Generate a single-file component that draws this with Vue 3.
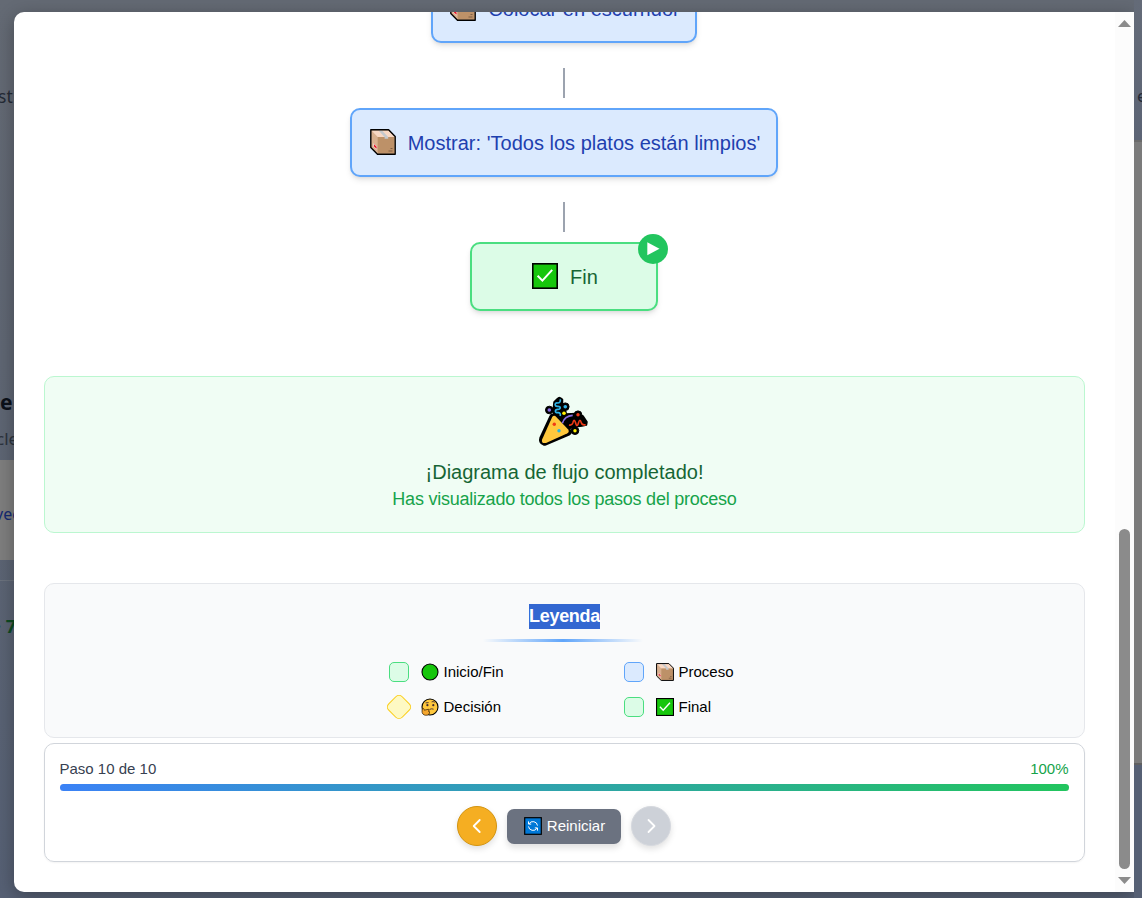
<script setup>
const legend = [
  { shape: 'green', icon: 'circle', label: 'Inicio/Fin' },
  { shape: 'blue', icon: 'box', label: 'Proceso' },
  { shape: 'diamond', icon: 'think', label: 'Decisión' },
  { shape: 'green', icon: 'check', label: 'Final' },
]
const progress = 100
</script>

<template>
  <svg class="defs" aria-hidden="true">
    <symbol id="i-box" viewBox="0 0 26 26">
      <path d="M1 1H18.5L25 7.5V25H7.5L1 18.5Z" fill="#d9b08f" />
      <path d="M1.5 1.5H18.4L24.5 8H7.7Z" fill="#f8d8c4" />
      <path d="M7.7 8H24.5V24.5H7.7Z" fill="#bd9168" />
      <path d="M8.5 1.5H12L18.2 8V9.7H14.6V8Z" fill="#c5c8cc" />
      <path d="M3.4 14.2L7 17.4V20.8L3.4 17.4Z" fill="#f3dfe0" />
      <path d="M4 15.2L6.6 17.7V19.7L4 17.4Z" fill="#e81224" />
      <path d="M20.5 19.5H22.5M18.5 22H22.5" stroke="#806044" stroke-width="1.2" />
      <path d="M.8 .8H18.6L25.2 7.4V25.2H7.5L.8 18.6Z" fill="none" stroke="#000" stroke-width="1.4" stroke-linejoin="round" />
    </symbol>
    <symbol id="i-check" viewBox="0 0 26 26">
      <rect x=".8" y=".8" width="24.4" height="24.4" fill="#16c60c" stroke="#000" stroke-width="1.6" />
      <path d="M5.6 12.8L10.4 17.6L20.2 6.8" fill="none" stroke="#fff" stroke-width="2" />
    </symbol>
    <symbol id="i-circle" viewBox="0 0 18 18">
      <circle cx="9" cy="9" r="8" fill="#16c60c" stroke="#000" stroke-width="1.1" />
    </symbol>
    <symbol id="i-think" viewBox="0 0 18 18">
      <circle cx="9" cy="9" r="8" fill="#ffc83d" stroke="#000" stroke-width="1.1" />
      <circle cx="6.4" cy="7.2" r="1.1" fill="#402a32" />
      <circle cx="12.3" cy="7.2" r="1.1" fill="#402a32" />
      <path d="M4.6 4.9L7.6 4.6M10.6 3.9Q12 3 13.8 4.3M8.6 11.4Q10.6 10.3 12.6 11.2" fill="none" stroke="#402a32" stroke-width=".9" />
      <path d="M1.3 10.6C2.3 9.8 3 10.6 3.3 12.2L7.2 11.3C8.7 11.3 8.6 12.7 7.3 13.1L8.4 13.5C9.2 15.6 7.4 17.4 4.8 17.3C2.2 17.2 .9 15.4 1 13Z" fill="#f5a62d" stroke="#2a1a08" stroke-width=".7" />
    </symbol>
    <symbol id="i-party" viewBox="0 0 52 52">
      <g fill="#000" stroke="#000" stroke-linejoin="round">
        <path d="M14.8 21.5L30 36L6.5 46Q4 45.5 5 42.5Z" stroke-width="7.5" />
        <circle cx="11.3" cy="14" r="3.8" /><circle cx="27.3" cy="10.7" r="3.8" />
        <circle cx="40" cy="18.7" r="3.8" /><circle cx="37" cy="34.7" r="3.8" />
        <path d="M19 3Q22 0 24.5 3.5L24.5 9L28 16L28 18L38 17.5L45 20L49 26L48.5 29L44 30L36 31L30 33L18 22L15 16L16 6Z" stroke-width="1.5" />
      </g>
      <path d="M14.2 21Q16 18.6 18.5 21.2L30.2 33.6Q31.8 36 29 37.6L8 46.9Q3.2 48 4 43.7Z" fill="#ffc83d" />
      <path d="M22.2 3.4C22.8 6 21.5 7.3 19 6.9C16.2 7 16.8 10.6 19.5 10.3C23.4 10 22.7 13.5 19.7 13.4C16.6 13.4 16.8 17 19.5 16.7C22 16.2 22.8 18 22.2 20" fill="none" stroke="#2cb4e8" stroke-width="1.7" />
      <path d="M31 29Q34 29.6 34.8 27Q36 22 37.5 26.5Q39 32.5 40.6 26.5Q42 22 43.2 26.5Q44 29.6 47.7 28.7" fill="none" stroke="#f03a17" stroke-width="1.6" />
      <path d="M24.4 27.2Q26.5 19.8 34.7 19.3" fill="none" stroke="#886ce4" stroke-width="1.7" />
      <circle cx="11.3" cy="14" r="1.8" fill="#886ce4" /><circle cx="27.3" cy="10.7" r="1.8" fill="#31b4e8" />
      <circle cx="26" cy="17.2" r="1.8" fill="#fff100" /><circle cx="40" cy="18.7" r="1.7" fill="#f03a17" />
      <circle cx="37" cy="34.7" r="1.7" fill="#fff100" />
      <circle cx="16.3" cy="28.3" r="1.7" fill="#f03a17" /><circle cx="21" cy="34.7" r="1.7" fill="#28b6dc" />
    </symbol>
    <symbol id="i-reload" viewBox="0 0 18 18">
      <rect x=".7" y=".7" width="16.6" height="16.6" fill="#0078d7" stroke="#000" stroke-width="1.2" />
      <g fill="none" stroke="#fff" stroke-width="1">
        <path d="M5 6.8A4.6 4.6 0 0 1 13.5 8.6M13 11.2A4.6 4.6 0 0 1 4.5 9.4" />
        <path d="M4.5 4.4V7.1H7.2M13.5 13.6V10.9H10.8" />
      </g>
    </symbol>
  </svg>

  <div class="page">
    <aside class="gutter left">
      <p class="l1">st</p>
      <p class="l2">e</p>
      <p class="l3">cle</p>
      <div class="band"><span>vec</span></div>
      <p class="l4">· 7</p>
    </aside>

    <main class="modal">
      <div class="content">
        <div class="node process first">
          <svg class="ico"><use href="#i-box" /></svg><span>Colocar en escurridor</span>
        </div>
        <i class="link"></i>
        <div class="node process second">
          <svg class="ico"><use href="#i-box" /></svg><span>Mostrar: 'Todos los platos están limpios'</span>
        </div>
        <i class="link"></i>
        <div class="node end">
          <svg class="ico"><use href="#i-check" /></svg><span>Fin</span>
          <b class="badge"><svg width="30" height="30"><path d="M9.3 8.2L21.5 14.7L9.3 21.3Z" fill="#fff" /></svg></b>
        </div>

        <section class="done">
          <svg class="party"><use href="#i-party" /></svg>
          <h3>¡Diagrama de flujo completado!</h3>
          <p>Has visualizado todos los pasos del proceso</p>
        </section>

        <section class="legend">
          <h4><span>Leyenda</span></h4>
          <div class="rule"></div>
          <div class="items">
            <div v-for="item in legend" :key="item.label" class="item">
              <span class="slot"><i class="swatch" :class="item.shape"></i></span>
              <svg class="mini"><use :href="'#i-' + item.icon" /></svg>
              <span class="label">{{ item.label }}</span>
            </div>
          </div>
        </section>

        <section class="controls">
          <div class="status"><span class="step">Paso 10 de 10</span><span class="pct">{{ progress }}%</span></div>
          <div class="bar"><div class="fill" :style="{ width: progress + '%' }"></div></div>
          <div class="buttons">
            <button class="round prev"><svg width="38" height="38"><path d="M21.7 13L15.7 19L21.7 25" /></svg></button>
            <button class="restart"><svg class="mini"><use href="#i-reload" /></svg><span class="label">Reiniciar</span></button>
            <button class="round next"><svg width="38" height="38"><path d="M16.5 13L22.5 19L16.5 25" /></svg></button>
          </div>
        </section>
      </div>
      <div class="scroll">
        <svg width="13" height="7"><path d="M0 7L6.5 0L13 7Z" fill="#8b8b8b" /></svg>
        <div class="thumb"></div>
        <svg width="13" height="7"><path d="M0 0L6.5 7L13 0Z" fill="#8b8b8b" /></svg>
      </div>
    </main>

    <aside class="gutter right"><div class="panel">e</div></aside>
  </div>
</template>

<style>
body { overflow: hidden; }
</style>

<style scoped>
* { box-sizing: border-box; }
.defs { position: absolute; width: 0; height: 0; }
h3, h4, p { margin: 0; font-weight: 400; }
svg { display: block; flex: none; }
.page {
  display: grid; grid-template-columns: 14px 1120px 8px; height: 898px; overflow: hidden;
  background: linear-gradient(#646a74, #5f6673 40%, #566074);
  font-family: "Liberation Sans", Arial, sans-serif;
}
.gutter { height: 898px; font-family: "Noto Sans", sans-serif; overflow: hidden; white-space: nowrap; }
.left p { line-height: 24px; }
.left .l1 { margin: 84px 0 0 -2px; font-size: 17.5px; color: #252b36; }
.left .l2 { margin-top: 282px; font-size: 21px; font-weight: 700; color: #0b1019; }
.left .l3 { margin: 13px 0 0 -4px; font-size: 17px; color: #2c333d; }
.band { height: 100px; margin-top: 9px; padding-top: 43px; background: #7e7e7e; color: #142a72; font-size: 16px; line-height: 22px; }
.band span { margin-left: -5px; }
.left .l4 { margin: 20px 0 0; padding-top: 33px; border-top: 1px solid #6b727d; font-size: 18px; font-weight: 700; color: #0c4a22; text-indent: -4px; }
.right .panel {
  height: 898px; padding: 84px 0 0 3px; font-size: 17px; line-height: 24px; color: #252b36;
  background: linear-gradient(#646b78, #5c6475 140px, #6b6b6b 140px, #6b6b6b 142px, #7b7b7b 142px, #7b7b7b 763px, #606060 763px, #606060 765px, #566074 765px);
}
.modal {
  display: flex; justify-content: space-between; margin-top: 12px; height: 880px; overflow: hidden;
  background: #fff; border-radius: 10px 0 0 10px; box-shadow: 0 4px 18px rgba(0, 0, 0, .3);
}
.content { width: 1041px; margin-left: 30px; display: flex; flex-direction: column; align-items: center; }
.node {
  position: relative; flex: none; display: flex; align-items: center; justify-content: center; height: 69px;
  margin-right: 1px; border: 2px solid; border-radius: 10px; font-size: 20px; white-space: nowrap;
  box-shadow: 0 4px 6px -1px rgba(0, 0, 0, .1), 0 2px 4px -2px rgba(0, 0, 0, .1);
}
.node span { padding-top: 2px; letter-spacing: .01px; }
.process { background: #dbeafe; border-color: #60a5fa; color: #1e40af; }
.end { width: 188px; background: #dcfce7; border-color: #4ade80; color: #166534; }
.first { width: 266px; margin-top: -38px; }
.second { width: 428px; }
.ico { width: 26px; height: 26px; margin: 0 12px 1px 2px; }
.link { flex: none; width: 2px; height: 30px; margin: 25px 1px 10px 0; background: #9ca3af; }
.badge { position: absolute; right: -12px; top: -10px; width: 30px; height: 30px; border-radius: 50%; background: #22c55e; }
.done {
  flex: none; width: 1041px; height: 157px; margin-top: 65px; padding-top: 19px; text-align: center;
  background: #f0fdf4; border: 1px solid #bbf7d0; border-radius: 10px;
}
.party { width: 52px; height: 52px; margin: 0 0 0 493px; }
.done h3 { margin-top: 9px; font-size: 20px; line-height: 30px; color: #166534; }
.done p { font-size: 18px; line-height: 24px; letter-spacing: -.23px; color: #16a34a; }
.legend {
  flex: none; width: 1041px; height: 155px; margin-top: 50px; padding-top: 20px;
  background: #f9fafb; border: 1px solid #e5e7eb; border-radius: 10px;
}
.legend h4 { font-size: 18px; font-weight: 700; line-height: 25px; text-align: center; color: #fff; letter-spacing: -.28px; }
.legend h4 span { display: inline-block; height: 25px; background: #3367d1; }
.rule { width: 160px; height: 3px; margin: 10px 0 0 438px; background: linear-gradient(90deg, transparent, #60a5fa, transparent); }
.items { display: grid; grid-template-columns: 235px 170px; justify-content: start; margin: 20px 0 0 341px; row-gap: 15px; }
.item { display: flex; align-items: center; height: 20px; font-size: 15px; color: #000; }
.slot { display: flex; align-items: center; justify-content: center; width: 26px; height: 20px; margin-right: 8.5px; }
.swatch { width: 20px; height: 20px; border: 1px solid #4ade80; border-radius: 5px; background: #dcfce7; }
.blue { background: #dbeafe; border-color: #60a5fa; }
.diamond { background: #fef9c3; border-color: #facc15; transform: rotate(45deg); }
.mini { width: 18px; height: 18px; margin: 0 5px 1px 0; }
.label { padding-bottom: 2px; }
.controls {
  flex: none; width: 1041px; height: 119px; margin-top: 5px; padding: 15px;
  border: 1px solid #d1d5db; border-radius: 10px; box-shadow: 0 1px 2px rgba(0, 0, 0, .05);
}
.status { display: flex; justify-content: space-between; font-size: 15px; line-height: 20px; color: #374151; margin: 0 .5px 0 -.5px; }
.pct { color: #16a34a; }
.bar { height: 7px; margin-top: 5px; border-radius: 4px; background: #e5e7eb; }
.fill { height: 7px; border-radius: 4px; background: linear-gradient(90deg, #3b82f6, #22c55e); }
.buttons { display: flex; justify-content: center; align-items: center; gap: 10px; margin: 15px 1px 0 0; }
button { display: flex; align-items: center; justify-content: center; padding: 0; font: 15px "Liberation Sans", Arial, sans-serif; }
.round { width: 40px; height: 40px; border-radius: 50%; border: 1px solid; box-shadow: 0 3px 6px rgba(0, 0, 0, .12); }
.round path { fill: none; stroke: #fff; stroke-width: 1.8; stroke-linecap: round; stroke-linejoin: round; }
.prev { background: #f5ae22; border-color: #d3940f; }
.next { background: #cdd1d8; border-color: #d6d9df; }
.restart { width: 114px; height: 35px; padding-left: 1px; border: 0; border-radius: 7px; background: #6b7280; color: #fff; box-shadow: 0 4px 6px rgba(0, 0, 0, .12); }
.scroll { display: flex; flex-direction: column; align-items: center; width: 19px; padding: 8px 0; background: #fcfcfc; }
.thumb { width: 11px; height: 340px; margin: 502px 0 8px; border-radius: 6px; background: #8b8b8b; }
</style>
